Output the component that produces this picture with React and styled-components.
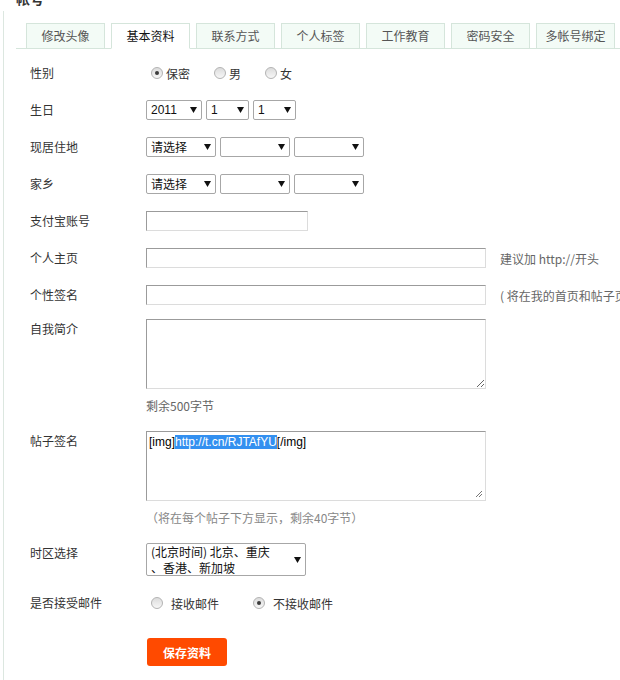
import React from "react";
import styled, { createGlobalStyle } from "styled-components";

const GlobalStyle = createGlobalStyle`
  html, body {
    margin: 0;
    padding: 0;
    background: #fff;
    overflow: hidden;
  }
  body {
    font-family: "Noto Sans CJK SC", "Noto Sans", sans-serif;
    font-size: 12px;
    color: #333;
  }
`;

const Page = styled.div`
  width: 620px;
  height: 680px;
  overflow: hidden;
`;

const Heading = styled.h2`
  margin: -12px 0 0 16px;
  font-size: 14px;
  line-height: 20px;
  font-weight: bold;
  color: #333;
`;

const Panel = styled.div`
  margin: 3px 0 0 3px;
  padding-top: 12px;
  border-left: 1px solid #dce7e0;
  min-height: 700px;
`;

const TabBar = styled.div`
  display: flex;
  align-items: flex-end;
  gap: 6px;
  margin-left: 12px;
  padding-left: 10px;
  height: 25px;
  border-bottom: 1px solid #d5e5db;
`;

const Tab = styled.div`
  flex-shrink: 0;
  box-sizing: border-box;
  width: 79px;
  height: 26px;
  margin-bottom: -1px;
  line-height: 24px;
  text-align: center;
  border: 1px solid #d5e5db;
  border-bottom-color: ${(p) => (p.$active ? "#fff" : "#d5e5db")};
  background: ${(p) => (p.$active ? "#fff" : "#f3fbf6")};
  color: ${(p) => (p.$active ? "#111" : "#555")};
`;

const Form = styled.div`
  padding: 6px 0 0 26px;
`;

const Row = styled.div`
  display: flex;
  align-items: flex-start;
  padding: ${(p) => (p.$tight ? "5px" : "8px")} 0 9px;
`;

const Label = styled.div`
  flex-shrink: 0;
  width: 116px;
  line-height: 20px;
  color: #333;
`;

const Field = styled.div`
  display: flex;
  align-items: center;
  gap: ${(p) => p.$gap || 0}px;
  min-height: 20px;
  white-space: nowrap;
`;

const Stack = styled.div`
  display: flex;
  flex-direction: column;
`;

const Choice = styled.label`
  display: flex;
  align-items: center;
  margin-right: ${(p) => p.$space || 19}px;
  color: #333;
`;

const Radio = styled.span`
  box-sizing: border-box;
  display: flex;
  align-items: center;
  justify-content: center;
  width: 12px;
  height: 12px;
  margin: 0 ${(p) => p.$after || 3}px 0 5px;
  border-radius: 50%;
  border: 1px solid #b3b3b3;
  background: linear-gradient(#dcdcdc, #f7f7f7);

  &::after {
    content: "";
    display: ${(p) => (p.$checked ? "block" : "none")};
    width: 4px;
    height: 4px;
    border-radius: 50%;
    background: #3c3c3c;
  }
`;

const SelectBox = styled.div`
  box-sizing: border-box;
  display: flex;
  align-items: center;
  justify-content: space-between;
  width: ${(p) => p.$w}px;
  height: ${(p) => p.$h || 20}px;
  padding: 0 4px;
  border: 1px solid #a7a7a7;
  border-radius: 2px;
  background: #fff;
  color: #111;
`;

const SelectValue = styled.span`
  font-family: ${(p) =>
    p.$latin
      ? `"Liberation Sans", Arial, sans-serif`
      : `"Noto Sans CJK SC", sans-serif`};
  font-size: 12px;
  line-height: 18px;
  white-space: nowrap;
`;

const SelectLines = styled.div`
  display: flex;
  flex-direction: column;
`;

const SelectLine = styled.span`
  font-size: 12px;
  line-height: 16px;
  white-space: nowrap;
`;

const TextInput = styled.input`
  box-sizing: border-box;
  width: ${(p) => p.$w}px;
  height: 20px;
  margin: 0;
  padding: 1px 3px;
  border: 1px solid;
  border-color: #9b9b9b #dcdcdc #dcdcdc #9b9b9b;
  font-size: 12px;
  outline: none;
`;

const Hint = styled.span`
  margin-left: 14px;
  color: #666;
  flex-shrink: 0;
`;

const TextArea = styled.textarea`
  box-sizing: border-box;
  display: block;
  width: 340px;
  height: 70px;
  margin: 0;
  padding: 2px;
  border: 1px solid;
  border-color: #9b9b9b #dcdcdc #dcdcdc #9b9b9b;
  font-family: "Liberation Sans", Arial, sans-serif;
  font-size: 12px;
  outline: none;
`;

const FakeArea = styled.div`
  box-sizing: border-box;
  position: relative;
  width: 340px;
  height: 70px;
  padding: 2px;
  border: 1px solid;
  border-color: #9b9b9b #dcdcdc #dcdcdc #9b9b9b;
  font-family: "Liberation Sans", Arial, sans-serif;
  font-size: 12px;
  line-height: 16px;
  color: #000;
`;

const Selected = styled.span`
  background: #3390f0;
  color: #fff;
`;

const Grip = styled.svg`
  position: absolute;
  right: 2px;
  bottom: 2px;
`;

const Note = styled.div`
  margin-top: 9px;
  line-height: 16px;
  color: ${(p) => p.$color || "#666"};
`;

const ButtonRow = styled.div`
  padding: 16px 0 0 117px;
`;

const SaveButton = styled.button`
  width: 80px;
  height: 28px;
  border: none;
  border-radius: 3px;
  background: #ff4a00;
  color: #fff;
  font-family: "Noto Sans CJK SC", sans-serif;
  font-size: 12px;
  font-weight: bold;
  cursor: pointer;
`;

const Arrow = () => (
  <svg width="7" height="6" viewBox="0 0 7 6">
    <path d="M0 0h7L3.5 6z" fill="#111" />
  </svg>
);

const Select = ({ w, value, latin }) => (
  <SelectBox $w={w}>
    <SelectValue $latin={latin}>{value}</SelectValue>
    <Arrow />
  </SelectBox>
);

const tabs = ["修改头像", "基本资料", "联系方式", "个人标签", "工作教育", "密码安全", "多帐号绑定"];

export default function App() {
  return (
    <Page>
      <GlobalStyle />
      <Heading>帐号</Heading>
      <Panel>
        <TabBar>
          {tabs.map((t) => (
            <Tab key={t} $active={t === "基本资料"}>
              {t}
            </Tab>
          ))}
        </TabBar>
        <Form>
          <Row>
            <Label>性别</Label>
            <Field>
              <Choice>
                <Radio $checked />
                保密
              </Choice>
              <Choice>
                <Radio />男
              </Choice>
              <Choice>
                <Radio />女
              </Choice>
            </Field>
          </Row>
          <Row>
            <Label>生日</Label>
            <Field $gap={4}>
              <Select w={56} value="2011" latin />
              <Select w={43} value="1" latin />
              <Select w={43} value="1" latin />
            </Field>
          </Row>
          <Row>
            <Label>现居住地</Label>
            <Field $gap={4}>
              <Select w={70} value="请选择" />
              <Select w={70} value="" />
              <Select w={70} value="" />
            </Field>
          </Row>
          <Row>
            <Label>家乡</Label>
            <Field $gap={4}>
              <Select w={70} value="请选择" />
              <Select w={70} value="" />
              <Select w={70} value="" />
            </Field>
          </Row>
          <Row>
            <Label>支付宝账号</Label>
            <Field>
              <TextInput $w={162} />
            </Field>
          </Row>
          <Row>
            <Label>个人主页</Label>
            <Field>
              <TextInput $w={340} />
              <Hint>建议加 http://开头</Hint>
            </Field>
          </Row>
          <Row>
            <Label>个性签名</Label>
            <Field>
              <TextInput $w={340} />
              <Hint>( 将在我的首页和帖子页显示 )</Hint>
            </Field>
          </Row>
          <Row $tight>
            <Label>自我简介</Label>
            <Stack>
              <TextArea />
              <Note>剩余500字节</Note>
            </Stack>
          </Row>
          <Row>
            <Label>帖子签名</Label>
            <Stack>
              <FakeArea>
                [img]<Selected>http://t.cn/RJTAfYU</Selected>[/img]
                <Grip width="8" height="8" viewBox="0 0 8 8">
                  <path d="M7 1L1 7M7 4L4 7" stroke="#777" strokeWidth="1" />
                </Grip>
              </FakeArea>
              <Note $color="#888">（将在每个帖子下方显示，剩余40字节）</Note>
            </Stack>
          </Row>
          <Row>
            <Label>时区选择</Label>
            <SelectBox $w={160} $h={33}>
              <SelectLines>
                <SelectLine>(北京时间) 北京、重庆</SelectLine>
                <SelectLine>、香港、新加坡</SelectLine>
              </SelectLines>
              <Arrow />
            </SelectBox>
          </Row>
          <Row>
            <Label>是否接受邮件</Label>
            <Field>
              <Choice $space={29}>
                <Radio $after={8} />
                接收邮件
              </Choice>
              <Choice>
                <Radio $checked $after={8} />
                不接收邮件
              </Choice>
            </Field>
          </Row>
          <ButtonRow>
            <SaveButton>保存资料</SaveButton>
          </ButtonRow>
        </Form>
      </Panel>
    </Page>
  );
}
